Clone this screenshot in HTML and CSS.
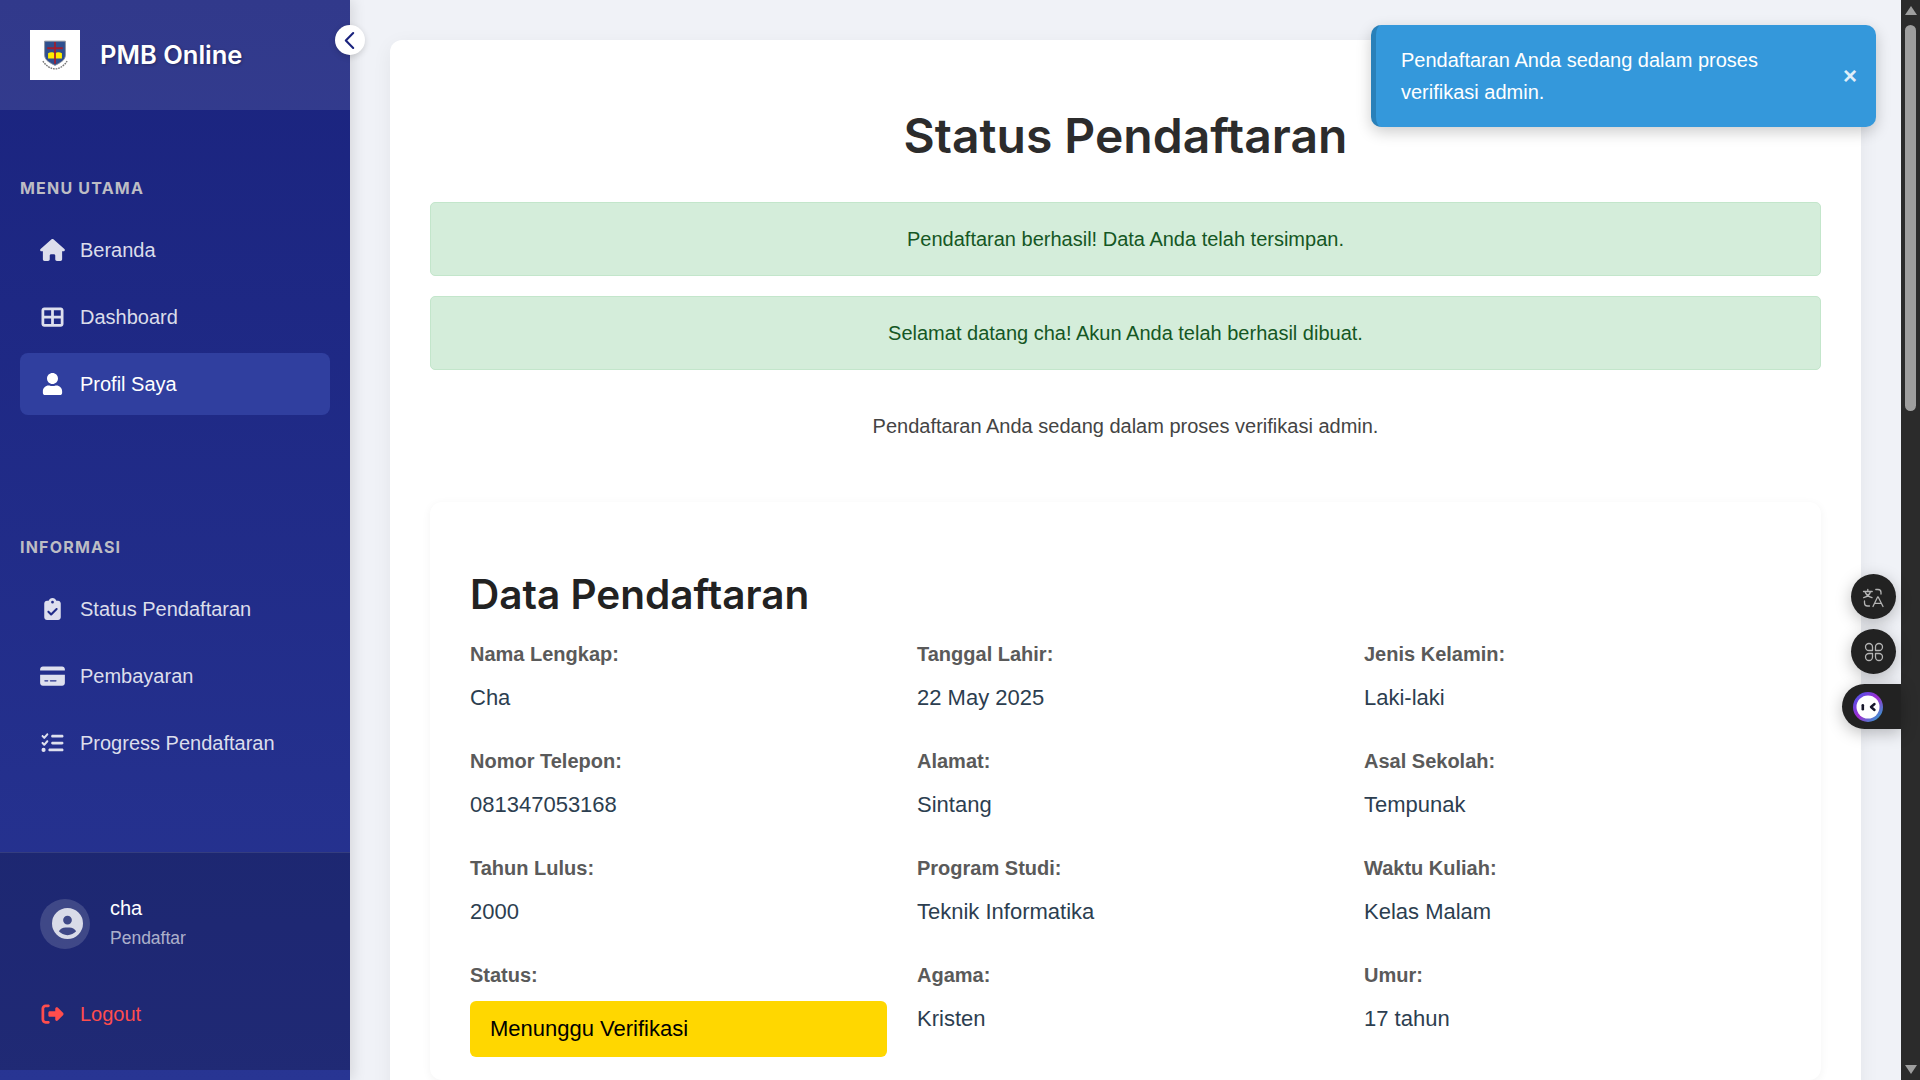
FILE: index.html
```html
<!DOCTYPE html>
<html lang="id">
<head>
<meta charset="utf-8">
<title>Status Pendaftaran - PMB Online</title>
<link rel="stylesheet" href="styles.css">
</head>
<body>
<div class="app">
  <aside class="sidebar">
    <header class="brand">
      <span class="brand-logo">
        <svg viewBox="0 0 30 36" width="26" height="32">
          <path d="M3 2h24v16c0 6-6 9-12 12C9 27 3 24 3 18z" fill="#2f4f8f" stroke="#8a8f9a"/>
          <path d="M7 16c3-2 6-1 8 0 2-1 5-2 8 0v6H7z" fill="#ffee00"/>
          <path d="M14 3h2v25h-2zM6 9h18v2.4H6z" fill="#a31d2d"/>
          <path d="M1 25c4 6 9 9 14 9s10-3 14-9" fill="none" stroke="#777" stroke-width="1.6" stroke-dasharray="2 1"/>
        </svg>
      </span>
      <span class="brand-name">PMB Online</span>
    </header>
    <button class="collapse" aria-label="Tutup menu">
      <svg viewBox="0 0 12 18" width="13" height="19"><path d="M9.500 2 2.500 9l7 7" fill="none" stroke="#1a237e" stroke-width="2" stroke-linecap="round" stroke-linejoin="round"/></svg>
    </button>
    <nav class="nav">
      <section class="nav-section">
        <h4 class="nav-label">Menu Utama</h4>
        <a class="nav-item"><svg class="ico" viewBox="0 0 576 512"><path d="M575.800 255.500c0 18-15 32.100-32 32.100h-32l.7 160.200c0 2.700-.2 5.400-.5 8.100V472c0 22.100-17.900 40-40 40H456c-1.100 0-2.200 0-3.300-.1c-1.400 .1-2.800 .1-4.200 .1H416 392c-22.100 0-40-17.900-40-40V448 384c0-17.700-14.300-32-32-32H256c-17.700 0-32 14.300-32 32v64 24c0 22.100-17.900 40-40 40H160 128.100c-1.500 0-3-.1-4.500-.2c-1.200 .1-2.400 .2-3.600 .2H104c-22.100 0-40-17.900-40-40V360c0-.9 0-1.900 .1-2.800V287.600H32c-18 0-32-14-32-32.100c0-9 3-17 10-24L266.400 8c7-7 15-8 22-8s15 2 21 7L564.800 231.500c8 7 12 15 11 24z"/></svg>Beranda</a>
        <a class="nav-item"><svg class="ico" viewBox="0 0 512 512"><path d="M448 96V224H288V96H448zm0 192V416H288V288H448zM224 224H64V96H224V224zM64 288H224V416H64V288zM64 32C28.700 32 0 60.700 0 96V416c0 35.300 28.700 64 64 64H448c35.300 0 64-28.700 64-64V96c0-35.300-28.700-64-64-64H64z"/></svg>Dashboard</a>
        <a class="nav-item active"><svg class="ico" viewBox="0 0 448 512"><path d="M224 256c70.700 0 128-57.300 128-128S294.700 0 224 0 96 57.300 96 128s57.300 128 128 128zm89.600 32h-16.700c-22.200 10.200-46.900 16-72.900 16s-50.600-5.800-72.900-16h-16.700C60.200 288 0 348.200 0 422.400V464c0 26.500 21.500 48 48 48h352c26.500 0 48-21.500 48-48v-41.600c0-74.200-60.200-134.400-134.400-134.400z"/></svg>Profil Saya</a>
      </section>
      <section class="nav-section">
        <h4 class="nav-label">Informasi</h4>
        <a class="nav-item"><svg class="ico" viewBox="0 0 384 512"><path d="M192 0c-41.800 0-77.400 26.700-90.500 64H64C28.700 64 0 92.700 0 128V448c0 35.300 28.700 64 64 64H320c35.300 0 64-28.700 64-64V128c0-35.300-28.700-64-64-64H282.500C269.400 26.700 233.800 0 192 0zm0 64a32 32 0 1 1 0 64 32 32 0 1 1 0-64zM305 273L177 401c-9.400 9.400-24.600 9.400-33.900 0L79 337c-9.400-9.400-9.400-24.600 0-33.900s24.600-9.400 33.900 0l47 47L271 239c9.400-9.400 24.600-9.400 33.900 0s9.400 24.600 0 33.900z"/></svg>Status Pendaftaran</a>
        <a class="nav-item"><svg class="ico" viewBox="0 0 576 512"><path d="M64 32C28.700 32 0 60.700 0 96v32H576V96c0-35.300-28.700-64-64-64H64zM576 224H0V416c0 35.300 28.700 64 64 64H512c35.300 0 64-28.700 64-64V224zM112 352h64c8.800 0 16 7.200 16 16s-7.200 16-16 16H112c-8.800 0-16-7.200-16-16s7.200-16 16-16zm112 16c0-8.800 7.200-16 16-16H368c8.800 0 16 7.200 16 16s-7.200 16-16 16H240c-8.800 0-16-7.200-16-16z"/></svg>Pembayaran</a>
        <a class="nav-item"><svg class="ico" viewBox="0 0 512 512"><path d="M152.100 38.200c9.900 8.900 10.700 24 1.800 33.900l-72 80c-4.400 4.900-10.600 7.800-17.200 7.900s-12.900-2.400-17.600-7L7 113C-2.300 103.600-2.300 88.400 7 79s24.600-9.400 33.900 0l22.100 22.100 55.100-61.200c8.900-9.900 24-10.700 33.900-1.800zm0 160c9.900 8.900 10.700 24 1.800 33.900l-72 80c-4.400 4.900-10.600 7.800-17.200 7.900s-12.900-2.400-17.600-7L7 273c-9.400-9.400-9.400-24.600 0-33.900s24.600-9.400 33.900 0l22.100 22.100 55.100-61.200c8.900-9.900 24-10.700 33.900-1.800zM224 96c0-17.700 14.300-32 32-32H480c17.700 0 32 14.300 32 32s-14.300 32-32 32H256c-17.700 0-32-14.300-32-32zm0 160c0-17.700 14.300-32 32-32H480c17.700 0 32 14.300 32 32s-14.300 32-32 32H256c-17.700 0-32-14.300-32-32zM160 416c0-17.700 14.300-32 32-32H480c17.700 0 32 14.300 32 32s-14.300 32-32 32H192c-17.700 0-32-14.300-32-32zM48 368a48 48 0 1 1 0 96 48 48 0 1 1 0-96z"/></svg>Progress Pendaftaran</a>
      </section>
    </nav>
    <footer class="side-foot">
      <div class="user">
        <span class="avatar"><svg viewBox="0 0 512 512" width="31" height="31"><path fill="#d9dbe8" d="M399 384.200C376.900 345.800 335.400 320 288 320H224c-47.400 0-88.900 25.800-111 64.200c35.200 39.200 86.200 63.800 143 63.800s107.800-24.700 143-63.800zM0 256a256 256 0 1 1 512 0A256 256 0 1 1 0 256zm256 16a72 72 0 1 0 0-144 72 72 0 1 0 0 144z"/></svg></span>
        <div class="user-text"><div class="user-name">cha</div><div class="user-role">Pendaftar</div></div>
      </div>
      <a class="logout"><svg class="ico" viewBox="0 0 512 512"><path d="M377.900 105.900L500.700 228.700c7.200 7.200 11.300 17.100 11.300 27.300s-4.100 20.100-11.300 27.300L377.900 406.100c-6.400 6.400-15 9.900-24 9.900c-18.700 0-33.900-15.200-33.900-33.900l0-62.100-128 0c-17.700 0-32-14.300-32-32l0-64c0-17.700 14.300-32 32-32l128 0 0-62.100c0-18.700 15.200-33.900 33.900-33.900c9 0 17.600 3.600 24 9.900zM160 96L96 96c-17.700 0-32 14.300-32 32l0 256c0 17.700 14.300 32 32 32l64 0c17.700 0 32 14.300 32 32s-14.300 32-32 32l-64 0c-53 0-96-43-96-96L0 128C0 75 43 32 96 32l64 0c17.700 0 32 14.300 32 32s-14.300 32-32 32z"/></svg>Logout</a>
    </footer>
  </aside>

  <main class="main">
    <div class="card">
      <h1 class="title">Status Pendaftaran</h1>
      <div class="alert">Pendaftaran berhasil! Data Anda telah tersimpan.</div>
      <div class="alert">Selamat datang cha! Akun Anda telah berhasil dibuat.</div>
      <p class="lead">Pendaftaran Anda sedang dalam proses verifikasi admin.</p>
      <section class="panel">
        <h2 class="panel-title">Data Pendaftaran</h2>
        <div class="grid">
          <div class="field"><div class="label">Nama Lengkap:</div><div class="value">Cha</div></div>
          <div class="field"><div class="label">Tanggal Lahir:</div><div class="value">22 May 2025</div></div>
          <div class="field"><div class="label">Jenis Kelamin:</div><div class="value">Laki-laki</div></div>
          <div class="field"><div class="label">Nomor Telepon:</div><div class="value">081347053168</div></div>
          <div class="field"><div class="label">Alamat:</div><div class="value">Sintang</div></div>
          <div class="field"><div class="label">Asal Sekolah:</div><div class="value">Tempunak</div></div>
          <div class="field"><div class="label">Tahun Lulus:</div><div class="value">2000</div></div>
          <div class="field"><div class="label">Program Studi:</div><div class="value">Teknik Informatika</div></div>
          <div class="field"><div class="label">Waktu Kuliah:</div><div class="value">Kelas Malam</div></div>
          <div class="field"><div class="label">Status:</div><div class="status">Menunggu Verifikasi</div></div>
          <div class="field"><div class="label">Agama:</div><div class="value">Kristen</div></div>
          <div class="field"><div class="label">Umur:</div><div class="value">17 tahun</div></div>
        </div>
      </section>
    </div>
  </main>

  <div class="scrollbar">
    <span class="arrow up"></span>
    <span class="thumb"></span>
    <span class="track"></span>
    <span class="arrow down"></span>
  </div>
</div>

<div class="toast">
  <span class="toast-text">Pendaftaran Anda sedang dalam proses verifikasi admin.</span>
  <span class="toast-close">×</span>
</div>

<div class="float-btn fb-translate">
  <svg viewBox="0 0 24 24" width="24" height="24" fill="none" stroke="#b4b4b4" stroke-width="1.300" stroke-linecap="round" stroke-linejoin="round">
    <path d="M1.500 6.500h8.700M5.800 4.300v2.200M8.500 6.500c-.6 2.800-3.200 5-6.800 6.200M3 6.500c.7 2.800 3.400 5 7 6.200"/>
    <path d="M13.800 4.500h2.200a3 3 0 0 1 3 3v1.500M2.500 16v2a3 3 0 0 0 3 3h2"/>
    <path d="M11 21.500l4.600-9.500h.6l4.800 9.500M12.700 18.300h6.800"/>
  </svg>
</div>
<div class="float-btn fb-apps">
  <svg viewBox="0 0 24 24" width="24" height="24" fill="none" stroke="#b4b4b4" stroke-width="1.300" stroke-linejoin="round">
    <path d="M7 3.500a3.500 3.500 0 0 1 3.500 3.500v3.500H7a3.500 3.500 0 0 1 0-7z"/>
    <path d="M17 3.500a3.500 3.500 0 0 1 0 7h-3.500V7a3.500 3.500 0 0 1 3.500-3.500z"/>
    <path d="M7 13.500h3.500V17a3.500 3.500 0 1 1-3.500-3.500z"/>
    <path d="M13.500 13.500H17a3.500 3.500 0 1 1-3.500 3.500z"/>
  </svg>
</div>
<div class="float-pill">
  <span class="face"><svg viewBox="0 0 30 30" width="30" height="30">
    <defs><linearGradient id="ring" x1="0" y1="0" x2="1" y2="1"><stop offset="0" stop-color="#3f5cf0"/><stop offset=".5" stop-color="#a02bd0"/><stop offset="1" stop-color="#18b8d0"/></linearGradient></defs>
    <circle cx="15" cy="15" r="15" fill="url(#ring)"/>
    <circle cx="15" cy="15" r="11.500" fill="#fff"/>
    <rect x="8.500" y="12" width="2.600" height="6.500" rx="1.300" fill="#17172b"/>
    <path d="M21.500 12l-3.500 3 3.500 3" fill="none" stroke="#17172b" stroke-width="2.400" stroke-linecap="round" stroke-linejoin="round"/>
  </svg></span>
</div>
</body>
</html>
```

FILE: styles.css
```css
* { box-sizing: border-box; }
html, body { margin: 0; height: 100%; overflow: hidden; }
body { font-family: "Liberation Sans", Arial, sans-serif; font-size: 20px; color: #333; background: #f0f2f7; }
.app { display: flex; height: 1080px; }

.sidebar { position: relative; width: 350px; flex: none; display: flex; flex-direction: column; padding-bottom: 10px; background: linear-gradient(180deg, #1a237e, #283593); box-shadow: 4px 0 12px rgba(0,0,0,.1); z-index: 2; }
.brand { height: 110px; flex: none; display: flex; align-items: center; gap: 20px; padding: 0 30px; background: rgba(255,255,255,.1); }
.brand-logo { width: 50px; height: 50px; background: #fff; display: flex; align-items: center; justify-content: center; }
.brand-name { font-family: Inter, sans-serif; font-weight: 600; font-size: 25.500px; color: #fff; text-shadow: 1px 1px 3px rgba(0,0,0,.3); margin-top: -2px; }
.collapse { position: absolute; top: 25px; right: -15px; width: 30px; height: 30px; padding: 0 2px 0 0; border: 0; border-radius: 50%; background: #fff; box-shadow: 0 2px 6px rgba(0,0,0,.15); display: flex; align-items: center; justify-content: center; }

.nav { flex: 1; padding: 66px 20px 0; display: flex; flex-direction: column; gap: 115px; }
.nav-label { margin: 0 0 19px; font-family: Inter, sans-serif; font-weight: 700; font-size: 16px; line-height: 24px; letter-spacing: 1.200px; text-transform: uppercase; color: #bdbdc4; }
.nav-item { display: flex; align-items: center; height: 62px; margin-bottom: 5px; padding-left: 20px; border-radius: 8px; color: rgba(255,255,255,.85); font-size: 20px; }
.nav-item.active { background: #303f9f; color: #fff; }
.ico { width: 25px; height: 22px; margin-right: 15px; flex: none; fill: currentColor; }

.side-foot { height: 218px; flex: none; padding: 41px 40px 0; border-top: 1px solid rgba(255,255,255,.1); background: rgba(0,0,0,.2); }
.user { display: flex; align-items: center; gap: 20px; }
.avatar { width: 50px; height: 50px; padding-left: 4px; border-radius: 50%; background: rgba(255,255,255,.15); display: flex; align-items: center; justify-content: center; }
.user-name { font-size: 20px; line-height: 29px; color: #fff; }
.user-role { font-size: 17.500px; line-height: 29px; color: rgba(255,255,255,.65); padding-top: 1px; }
.logout { display: flex; align-items: center; margin-top: 45px; color: #ff4d4d; font-size: 20px; line-height: 32px; }

.main { flex: 1; min-width: 0; padding: 40px 40px 0; }
.card { height: 1200px; padding: 40px; background: #fff; border-radius: 12px; box-shadow: 0 5px 20px rgba(0,0,0,.06); }
.title { margin: 23px 0 33px; text-align: center; font-family: Inter, sans-serif; font-weight: 600; font-size: 48px; line-height: 66px; color: #2c2c2c; }
.alert { height: 74px; margin-bottom: 20px; border: 1px solid #c3e6cb; border-radius: 5px; background: #d4edda; color: #155724; display: flex; align-items: center; justify-content: center; }
.lead { margin: 0 0 60px; text-align: center; line-height: 32px; padding-top: 20px; color: #444; }
.panel { padding: 65px 40px 40px; border-radius: 12px; background: #fff; box-shadow: 0 2px 10px rgba(0,0,0,.05); }
.panel-title { margin: 0 0 19px; font-family: Inter, sans-serif; font-weight: 600; font-size: 40.500px; line-height: 56px; color: #222; }
.grid { display: grid; grid-template-columns: repeat(3, 1fr); column-gap: 30px; row-gap: 30px; }
.field { height: 77px; }
.label { font-weight: 700; color: #5a5a5a; line-height: 24px; margin-bottom: 19px; }
.value { color: #2c3e50; font-size: 22px; line-height: 26px; }
.status { height: 56px; padding: 0 20px; background: #ffd700; color: #000; font-size: 22px; border-radius: 6px; display: flex; align-items: center; margin-top: -5px; }

.scrollbar { width: 19px; flex: none; background: #2b2b2b; display: flex; flex-direction: column; align-items: center; z-index: 3; }
.arrow { width: 0; height: 0; border-left: 6.500px solid transparent; border-right: 6.500px solid transparent; flex: none; }
.arrow.up { border-bottom: 9px solid #9e9e9e; margin-top: 6px; }
.arrow.down { border-top: 9px solid #9e9e9e; margin-bottom: 6px; }
.thumb { width: 11px; height: 386px; margin-top: 10px; border-radius: 6px; background: #9e9e9e; flex: none; }
.track { flex: 1; }

.toast { position: absolute; top: 25px; left: 1371px; width: 505px; height: 102px; padding: 0 19px 0 25px; display: flex; align-items: center; justify-content: space-between; gap: 20px; background: #3498db; border-left: 5px solid #2980b9; border-radius: 10px; color: #fff; line-height: 32px; box-shadow: 0 5px 15px rgba(0,0,0,.2); z-index: 5; }
.toast-text { width: 390px; }
.toast-close { font-weight: 700; font-size: 24px; color: rgba(255,255,255,.85); }

.float-btn { position: absolute; left: 1851px; width: 45px; height: 45px; border-radius: 50%; background: #222; display: flex; align-items: center; justify-content: center; box-shadow: 0 4px 16px rgba(0,0,0,.25); z-index: 4; }
.fb-translate { top: 574px; }
.fb-apps { top: 629px; }
.float-pill { position: absolute; left: 1842px; top: 684px; width: 59px; height: 45px; border-radius: 23px 0 0 23px; background: #222; display: flex; align-items: center; padding-left: 11px; box-shadow: 0 4px 16px rgba(0,0,0,.25); z-index: 4; }
.face { display: flex; }
```
